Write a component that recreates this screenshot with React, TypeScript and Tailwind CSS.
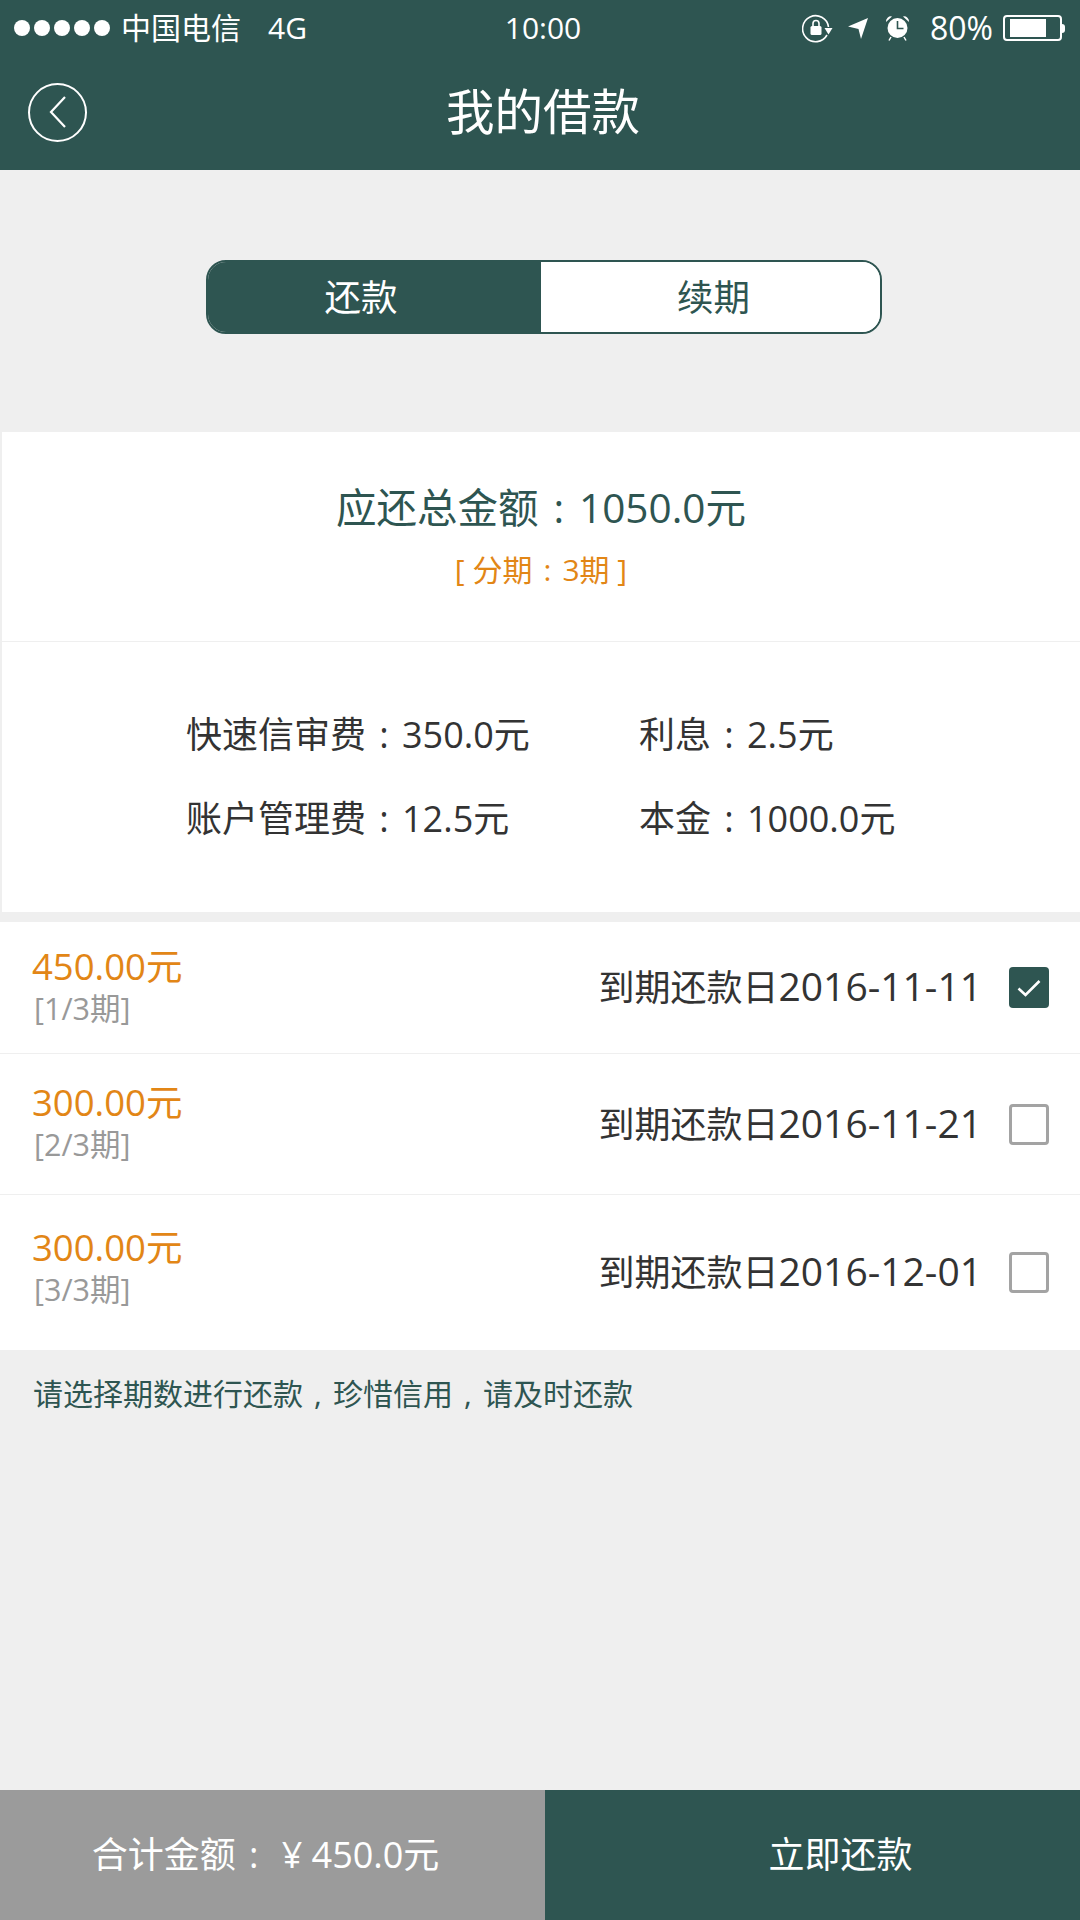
const fontStack = { fontFamily: '"Open Sans", "Noto Sans CJK SC", sans-serif' };

const instalments = [
    { amount: "450.00元", term: "[1/3期]", date: "2016-11-11", checked: true, height: "h-[132px]", pad: "pt-[21px]" },
    { amount: "300.00元", term: "[2/3期]", date: "2016-11-21", checked: false, height: "h-[141px]", pad: "pt-[25px]" },
    { amount: "300.00元", term: "[3/3期]", date: "2016-12-01", checked: false, height: "h-[155px]", pad: "pt-[29px]" },
];

/** Full-width punctuation is centred in its em box in the reference. */
function Punct({ children }: { children: string }) {
    return <span className="inline-block w-[1em] text-center">{children}</span>;
}

/** iOS style status bar icons, drawn because the packages have no match. */
function RotationLockIcon() {
    return (
        <svg width="31" height="29" viewBox="0 0 31 29" fill="none">
            <path d="M25 21a13 13 0 1 1 1.5-8" stroke="white" strokeWidth="1.6" />
            <path d="M22.5 14h8l-4 6.5z" fill="white" />
            <rect x="8.5" y="12" width="11" height="9" rx="1.5" fill="white" />
            <path d="M11 12V9.5a3 3 0 0 1 6 0V12" stroke="white" strokeWidth="1.6" />
        </svg>
    );
}

function LocationIcon() {
    return (
        <svg width="22" height="21" viewBox="0 0 22 21">
            <path d="M21 0 14 21l-2.500-10L1 8.500z" fill="white" />
        </svg>
    );
}

function AlarmIcon() {
    return (
        <svg width="25" height="26" viewBox="0 0 25 26" fill="none">
            <circle cx="12.500" cy="13" r="10" fill="white" />
            <path d="M1 7a5 5 0 0 1 6-5.500zM24 7a5 5 0 0 0-6-5.500z" fill="white" />
            <path d="M6 22l-2 3.500M19 22l2 3.500" stroke="white" strokeWidth="1.500" />
            <path d="M12.500 6v7.500h6" stroke="#2e5551" strokeWidth="1.600" />
        </svg>
    );
}

function StatusBar() {
    return (
        <div className="flex h-[56px] items-center justify-between pl-[14px] pr-[15px] text-[30px] leading-none text-white">
            <div className="flex w-[310px] items-center">
                <span className="flex gap-[4px]">
                    {[0, 1, 2, 3, 4].map((dot) => (
                        <span key={dot} className="h-[16px] w-[16px] rounded-full bg-white" />
                    ))}
                </span>
                <span className="ml-[11px]">中国电信</span>
                <span className="ml-[27px]">4G</span>
            </div>
            <span className="mr-[3px]">10:00</span>
            <div className="flex w-[300px] items-center justify-end">
                <RotationLockIcon />
                <span className="ml-[14px] flex"><LocationIcon /></span>
                <span className="ml-[16px] flex"><AlarmIcon /></span>
                <span className="ml-[20px] text-[32px]">80%</span>
                <span className="ml-[10px] flex items-center">
                    <span className="flex h-[26px] w-[59px] items-center rounded-[4px] border-2 border-white py-[2px] pl-[5px]">
                        <span className="h-full w-[36px] bg-white" />
                    </span>
                    <span className="h-[9px] w-[3px] rounded-r-sm bg-white" />
                </span>
            </div>
        </div>
    );
}

function Header() {
    return (
        <header className="h-[170px] bg-[#2e5551]">
            <StatusBar />
            <div className="flex h-[112px] items-center px-[28px]">
                <span className="flex h-[59px] w-[59px] items-center justify-center rounded-full border-2 border-white">
                    <svg width="18" height="32" viewBox="0 0 18 32" fill="none">
                        <path d="M16 1 2 16l14 15" stroke="white" strokeWidth="2.200" />
                    </svg>
                </span>
                <h1 className="flex-1 pb-[2px] pr-[53px] text-center text-[48.500px] font-normal leading-none text-white">我的借款</h1>
            </div>
        </header>
    );
}

function SegmentTabs() {
    return (
        <div className="flex justify-center pb-[98px] pl-[8px] pt-[90px]">
            <div className="flex h-[74px] w-[676px] overflow-hidden rounded-[20px] border-2 border-[#2e5551] text-[36.500px] leading-none">
                <div className="flex w-[333px] items-center justify-center border-r border-[#2e5551] bg-[#2e5551] pr-[26px] text-white">还款</div>
                <div className="flex flex-1 items-center justify-center bg-white pl-[6px] text-[#2e5551]">续期</div>
            </div>
        </div>
    );
}

function Summary() {
    return (
        <section className="border-l-2 border-[#efefef] bg-white">
            <div className="flex h-[210px] flex-col items-center border-b border-[#efefef] pt-[51px]">
                <p className="text-[40.500px] leading-[50px] text-[#2e5551]">应还总金额<Punct>:</Punct>1050.0元</p>
                <p className="mt-[18px] text-[30px] leading-[38px] text-[#e28616]">[ 分期<Punct>:</Punct>3期 ]</p>
            </div>
            <div className="grid h-[270px] grid-cols-[453px_1fr] content-start gap-y-[36px] pl-[184px] pt-[69px] text-[36px] leading-[48px] text-[#333333]">
                <span>快速信审费<Punct>:</Punct>350.0元</span>
                <span>利息<Punct>:</Punct>2.5元</span>
                <span>账户管理费<Punct>:</Punct>12.5元</span>
                <span>本金<Punct>:</Punct>1000.0元</span>
            </div>
        </section>
    );
}

function Checkbox({ checked }: { checked: boolean }) {
    if (checked) {
        return (
            <span className="flex h-[41px] w-[40px] items-center justify-center rounded-[4px] bg-[#2e5551]">
                <svg width="24" height="18" viewBox="0 0 24 18" fill="none">
                    <path d="M1.500 9.500l7 6.500L22.500 2" stroke="white" strokeWidth="2.600" />
                </svg>
            </span>
        );
    }
    return <span className="h-[41px] w-[40px] rounded-[4px] border-[3px] border-[#a3a3a3] bg-white" />;
}

function InstalmentList() {
    return (
        <section className="mt-[10px] divide-y divide-[#efefef] bg-white">
            {instalments.map((item) => (
                <div key={item.term} className={`flex items-center pl-[32px] pr-[31px] ${item.height}`}>
                    <div className={`flex flex-col self-start ${item.pad}`}>
                        <span className="text-[36.500px] leading-[46px] text-[#e28616]">{item.amount}</span>
                        <span className="ml-[2px] mt-[1px] text-[30.500px] leading-[36px] text-[#999999]">{item.term}</span>
                    </div>
                    <span className="ml-auto pb-[3px] text-[36px] leading-none text-[#333333]">
                        到期还款日<span className="text-[39px]">{item.date}</span>
                    </span>
                    <span className="ml-[27px] flex"><Checkbox checked={item.checked} /></span>
                </div>
            ))}
        </section>
    );
}

function App() {
    return (
        <div style={fontStack} className="flex min-h-[1920px] flex-col bg-[#efefef] font-normal">
            <Header />
            <SegmentTabs />
            <Summary />
            <InstalmentList />
            <p className="pl-[33px] pt-[24px] text-[30px] leading-[40px] text-[#2e5551]">
                请选择期数进行还款<Punct>,</Punct>珍惜信用<Punct>,</Punct>请及时还款
            </p>
            <footer className="mt-auto flex h-[130px] text-[36px] leading-none text-white">
                <div className="flex w-[545px] items-center justify-center bg-[#9b9b9b] pr-[14px]">
                    合计金额<Punct>:</Punct><span className="ml-[10px]">¥ 450.0元</span>
                </div>
                <div className="flex flex-1 items-center justify-center bg-[#2e5551] pl-[56px]">立即还款</div>
            </footer>
        </div>
    );
}

export default App;
